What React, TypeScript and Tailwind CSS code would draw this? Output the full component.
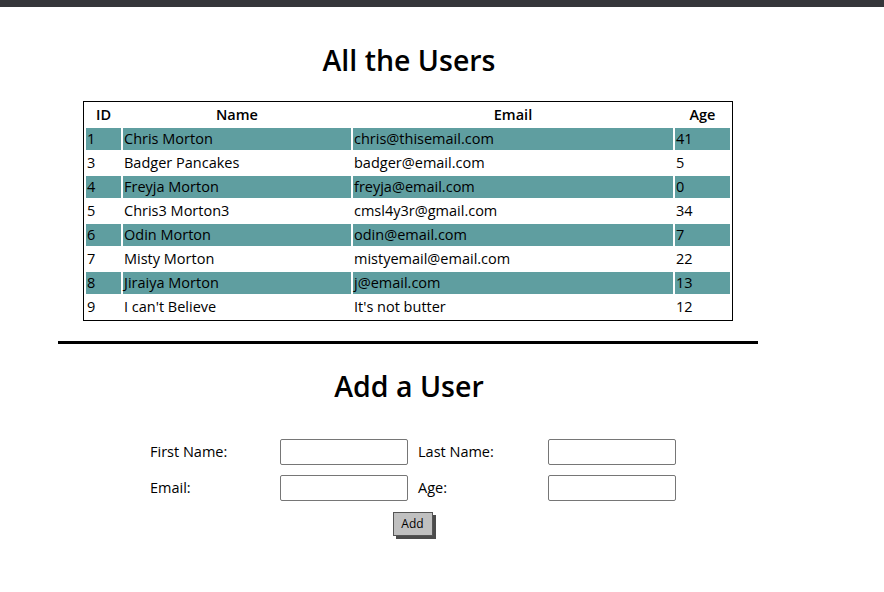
import React from 'react';

type User = { id: number; first: string; last: string; email: string; age: number };

const USERS: User[] = [
  { id: 1, first: 'Chris', last: 'Morton', email: 'chris@thisemail.com', age: 41 },
  { id: 3, first: 'Badger', last: 'Pancakes', email: 'badger@email.com', age: 5 },
  { id: 4, first: 'Freyja', last: 'Morton', email: 'freyja@email.com', age: 0 },
  { id: 5, first: 'Chris3', last: 'Morton3', email: 'cmsl4y3r@gmail.com', age: 34 },
  { id: 6, first: 'Odin', last: 'Morton', email: 'odin@email.com', age: 7 },
  { id: 7, first: 'Misty', last: 'Morton', email: 'mistyemail@email.com', age: 22 },
  { id: 8, first: 'Jiraiya', last: 'Morton', email: 'j@email.com', age: 13 },
  { id: 9, first: "I can't", last: 'Believe', email: "It's not butter", age: 12 },
];

function Field({ label }: { label: string }) {
  return (
    <>
      <label className="text-[14.5px] leading-[26px]">{label}</label>
      <div>
        <input type="text" className="h-[26px] w-[128px] rounded-[2px] border border-[#767676] bg-white" />
      </div>
    </>
  );
}

export default function App() {
  return (
    <div className="min-h-[592px] bg-white text-black" style={{ fontFamily: '"Open Sans", sans-serif' }}>
      {/* Top browser bar */}
      <div className="h-[7px] bg-[#35363a]" />

      <div className="w-[816px]">
        {/* Users table */}
        <h1 className="mt-[34px] pl-[2px] text-center text-[28.5px] font-semibold leading-[38px]">All the Users</h1>
        <div className="mt-[22px] flex justify-center">
          <table className="w-[650px] border-separate border-spacing-[2px] border border-black text-[14.5px]">
            <thead>
              <tr className="h-[22px] leading-[22px]">
                <th className="w-[35px] font-semibold">ID</th>
                <th className="w-[228px] font-semibold">Name</th>
                <th className="font-semibold">Email</th>
                <th className="w-[55px] font-semibold">Age</th>
              </tr>
            </thead>
            <tbody>
              {USERS.map((u, i) => {
                const cell = i % 2 === 0 ? 'bg-[#5f9ea0] px-[1px] text-left' : 'px-[1px] text-left';
                return (
                  <tr key={u.id} className="h-[22px] leading-[22px]">
                    <td className={cell}>{u.id}</td>
                    <td className={cell}>{u.first} {u.last}</td>
                    <td className={cell}>{u.email}</td>
                    <td className={cell}>{u.age}</td>
                  </tr>
                );
              })}
            </tbody>
          </table>
        </div>

        <div className="mx-auto mt-[20px] h-[3px] w-[700px] bg-black" />

        {/* Add form */}
        <h1 className="mt-[23px] pl-[2px] text-center text-[28.5px] font-semibold leading-[38px]">Add a User</h1>
        <div className="mt-[34px] flex justify-center pl-[10px]">
          <div className="grid grid-cols-[130px_138px_130px_128px] gap-y-[10px]">
            <Field label="First Name:" />
            <Field label="Last Name:" />
            <Field label="Email:" />
            <Field label="Age:" />
          </div>
        </div>
        <div className="mt-[11px] flex justify-center pl-[9px]">
          <button className="h-[24px] w-[40px] border border-[#555] bg-[#c0c0c0] text-[12px] shadow-[3px_3px_0_#4b4b4b]">
            Add
          </button>
        </div>
      </div>
    </div>
  );
}
